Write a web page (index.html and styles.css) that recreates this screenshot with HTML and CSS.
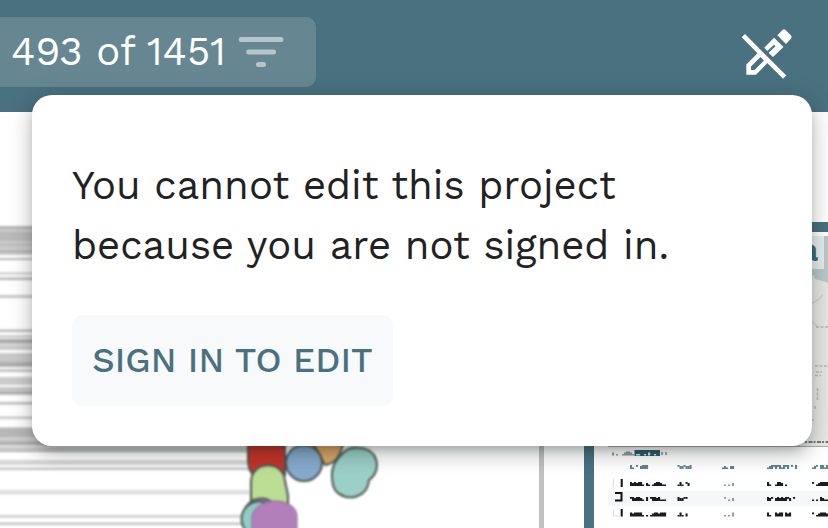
FILE: index.html
```html
<!DOCTYPE html>
<html lang="en">
<head>
<meta charset="utf-8">
<title>Project</title>
<link rel="stylesheet" href="styles.css">
</head>
<body>
<header class="toolbar">
  <div class="filter">
    <span class="count">493 of 1451</span>
    <svg class="filter-icon" width="46" height="34" viewBox="0 0 46 34"><path d="M3.200 4.500H43M10.700 17H35.500M20.500 29.500H25.500" fill="none" stroke="#b7c5cb" stroke-width="5" stroke-linecap="round"/></svg>
  </div>
  <svg class="edit-icon" width="56" height="56" viewBox="0 0 56 56">
    <path d="M9.300 50.700V40.500L21.300 28.500L30.700 38.700L19 50.700ZM14 42.500V46H17.500L27 36.500L23.500 33Z" fill="#fff" fill-rule="evenodd"/>
    <path d="M27.300 23.700L37 13.700L46.500 23L36 33L31.500 28.800L38.500 22.300L37 20.700L30.200 27Z" fill="#fff"/>
    <path d="M40.300 11.300L45.500 6Q47 4.500 48.500 6L54 11.500Q55.300 13 54 14.500L49 20Z" fill="#fff"/>
    <path d="M6.300 11.700L47.700 53.200" stroke="#fff" stroke-width="4.600"/>
  </svg>
</header>
<main class="workspace">
  <section class="tree">
    <svg width="539" height="416" viewBox="0 112 539 416">
      <g id="stripes" class="stripes"></g>
      <g class="nodes">
        <path d="M248 438H285V475H253Q248 469 248 460Z" fill="#c6352c"/>
        <path d="M310 438H344Q341 463 325 465Z" fill="#dfa867"/>
        <circle cx="304" cy="463" r="18" fill="#86aacd"/>
        <path d="M343 453C350 445 367 446 374 455C380 466 376 475 369 480L368 485C363 502 337 501 333 485C330 471 333 462 343 453Z" fill="#9bd0c8"/>
        <path d="M251 505V481C252 460 284 460 285 481L288 495V515H252Z" fill="#bbdd94"/>
        <circle cx="261" cy="516" r="17.500" fill="#b584bd"/>
        <circle cx="259" cy="519" r="17.500" fill="#91ccc4"/>
        <path d="M252 535V517C254 497 294 495 297 515V535Z" fill="#b37fba" class="front"/>
      </g>
    </svg>
  </section>
  <div class="divider"></div>
  <section class="panel">
    <div class="map"><b class="map-title">a</b>
      <svg class="map-art" width="28" height="210" viewBox="800 236 28 210">
        <path d="M800 281Q816 277 828 283V446H800Z" fill="#e7e8e6"/>
        <path d="M813 274L815 279L820 281H812Z" fill="#e7e8e6"/>
        <path d="M812 303Q820 300 823 294M812 322L817 326" fill="none" stroke="#cfd0cf" stroke-width="1.500"/>
        <path d="M816 327H828M815 366H828M816 372H822M815 375.500H821M817.500 388V400M815 406V409M813 419V421" fill="none" stroke="#b8bab9" stroke-width="1.500" stroke-dasharray="3 1.500"/>
        <path d="M805 442H828" stroke="#777" stroke-width="2" stroke-dasharray="2 1.500 4 1"/>
      </svg>
    </div>
    <svg class="table" width="220" height="82" viewBox="608 446 220 82">
      <path d="M608 446.500H828" stroke="#a9adad"/>
      <path d="M608 490.500H828V506H608Z" fill="#f6f7f9"/>
      <path d="M634.500 450H660V456H634.500Z" fill="#2f5d6c"/>
      <g id="marks" class="marks"></g>
      <path d="M621.700 479V487M621.700 509V516.500M615 493H621.500V500.500H615" fill="none" stroke="#111" stroke-width="2"/>
      <path d="M613.500 479V487M613.500 510V516H621" fill="none" stroke="#ddd"/>
    </svg>
  </section>
</main>
<div class="popup">
  <p class="message"><span class="line">You cannot edit this project</span> <span class="line">because you are not signed in.</span></p>
  <button class="sign-in">SIGN IN TO EDIT</button>
</div>
<script src="art.js"></script>
</body>
</html>
```
FILE: styles.css
```css
* { box-sizing: border-box; }
body { margin: 0; width: 828px; height: 528px; overflow: hidden; position: relative; background: #fff; font-family: "Work Sans", "Open Sans", sans-serif; }
.toolbar { height: 112px; background: #4a7180; display: flex; justify-content: space-between; align-items: flex-start; padding: 17px 35px 0 0; }
.filter { width: 316px; height: 70px; padding-left: 11px; border-radius: 0 10px 10px 0; background: #668791; display: flex; align-items: center; }
.count { width: 227px; color: #fff; font: 400 40px/70px "Work Sans", Inter, sans-serif; white-space: nowrap; }
.filter-icon { flex: none; }
.edit-icon { margin-top: 7px; }
.workspace { display: flex; height: 416px; }
.tree { width: 539px; }
.tree svg, .table { display: block; }
.nodes { filter: blur(0.8px); }
.nodes path, .nodes circle { stroke: #4b5553; stroke-width: 2; }
.nodes .front { stroke: #8b6d90; stroke-width: 1; }
.stripes { filter: blur(0.9px); }
.marks { filter: blur(0.5px); }
.divider { width: 5px; background: #c1c1c1; }
.panel { width: 244px; margin: 110px 0 0 40px; border: solid #4a7180; border-width: 10px 0 0 10px; padding-left: 14px; }
.map { height: 214px; padding: 4px 4px 0 0; background: linear-gradient(#fff 4px, #bcc8ca 4px); position: relative; }
.map-title { display: block; height: 33px; background: #e8edec; color: #40697a; padding-left: 191px; font: 700 33px/27px "Work Sans", "Open Sans", sans-serif; }
.map-art { position: absolute; right: 0; bottom: 0; }
.popup { position: absolute; left: 32px; top: 95px; width: 780px; height: 351px; border-radius: 20px; background: #fff; padding: 61px 40px 0; box-shadow: 0 6px 10px -3px rgba(0,0,0,.2), 0 10px 20px rgba(0,20,15,.16), 0 2px 28px rgba(0,20,15,.13); }
.message { margin: 0 0 39px; color: #222; font-size: 40px; line-height: 60px; }
.line { display: block; white-space: nowrap; }
.sign-in { display: block; width: 321px; height: 91px; padding: 0; border: 0; border-radius: 10px; background: #f7f9fb; color: #4a7180; font: 500 35px/91px "Work Sans", "Open Sans", sans-serif; white-space: nowrap; }
```
FILE: art.js
```js
const ns = "http://www.w3.org/2000/svg";
function rect(parent, x, y, width, height, fill) {
  const r = document.createElementNS(ns, "rect");
  for (const [k, v] of Object.entries({ x, y, width, height, fill })) r.setAttribute(k, v);
  parent.append(r);
}

// Tree branches: top, height, colour
const stripes = document.getElementById("stripes");
[[226,29,"#ccc"],[226,3,"#b5b5b5"],[232,9,"#b9b9b9"],[244,2,"#bbb"],[250,3,"#b9b9b9"],[258,2,"#bbb"],[272.5,2,"#c6c6c6"],[277.5,2.5,"#b5b5b5"],[295,3,"#c8c8c8"],
[329.5,2.5,"#bbb"],[335,3,"#d0d0d0"],[339,4,"#aaa"],[343,7,"#d4d4d4"],[347,2,"#c4c4c4"],[353,14,"#c9c9c9"],[362,5,"#b0b0b0"],[369,3,"#c6c6c6"],[377,8,"#ccc"],[387,8,"#c8c8c8"],[392,2,"#aaa"],[402,2.5,"#bbb"],[416.5,2.5,"#c9c9c9"],
[427.5,18,"#b7b7b7"],[437,4,"#cecece"],[443,2,"#aaa"],[447,1.5,"#aaa"],[449.5,2.5,"#b4b4b4"],[460,5,"#d6d6d6"],[467.5,2.5,"#c3c3c3"],[490,4.5,"#dedede"],[515,2.5,"#cbcbcb"],[522.5,2.5,"#c4c4c4"]
].forEach(([y, h, c]) => rect(stripes, -5, y, 255, h, c));

// Miniature table text on a 2px grid: # tall, = middle, . low, ' high
const marks = document.getElementById("marks");
const shapes = { "#": [0, 4], "=": [1, 3], ".": [2.5, 1.5], "'": [0, 1.8] };
function word(x, y, pattern, color) {
  [...pattern].forEach((ch, i) => {
    const s = shapes[ch];
    if (s) rect(marks, x + i * 2, y + s[0], 2.1, s[1], color);
  });
}
const teal = "#5d8492", ink = "#1c1c1c";
const columns = [630, 677.5, 722, 767, 812];
[
  [465, teal, ["#. ' =###", "'=='==#", ".=. ==", ".=#'#'#.#'# ' #", ".=' ##.#"]],
  [482, ink, ["#=#=##. =. .=##=..", ".#. '=", " . . =", "#.  .##= .", "' .=####"]],
  [497, ink, ["'#=##=. # '##=#...", "#=='' ", " ' . =", "#=' =#=#=#'= '", ". . #=.."]],
  [512.5, ink, ["#=####. . .=##=###", ".#. = ", " . . #", "#.  #=## #=#", "' .=###="]],
].forEach(([y, color, row]) => row.forEach((p, i) => word(columns[i], y, p, i === 2 && color === ink ? "#999" : color)));
word(612, 451.5, "= .  .=##=.", "#999");
word(636, 451.5, "..  . =  .", "#dfe8ea");
word(661, 451, "= =", "#aaa");
```
